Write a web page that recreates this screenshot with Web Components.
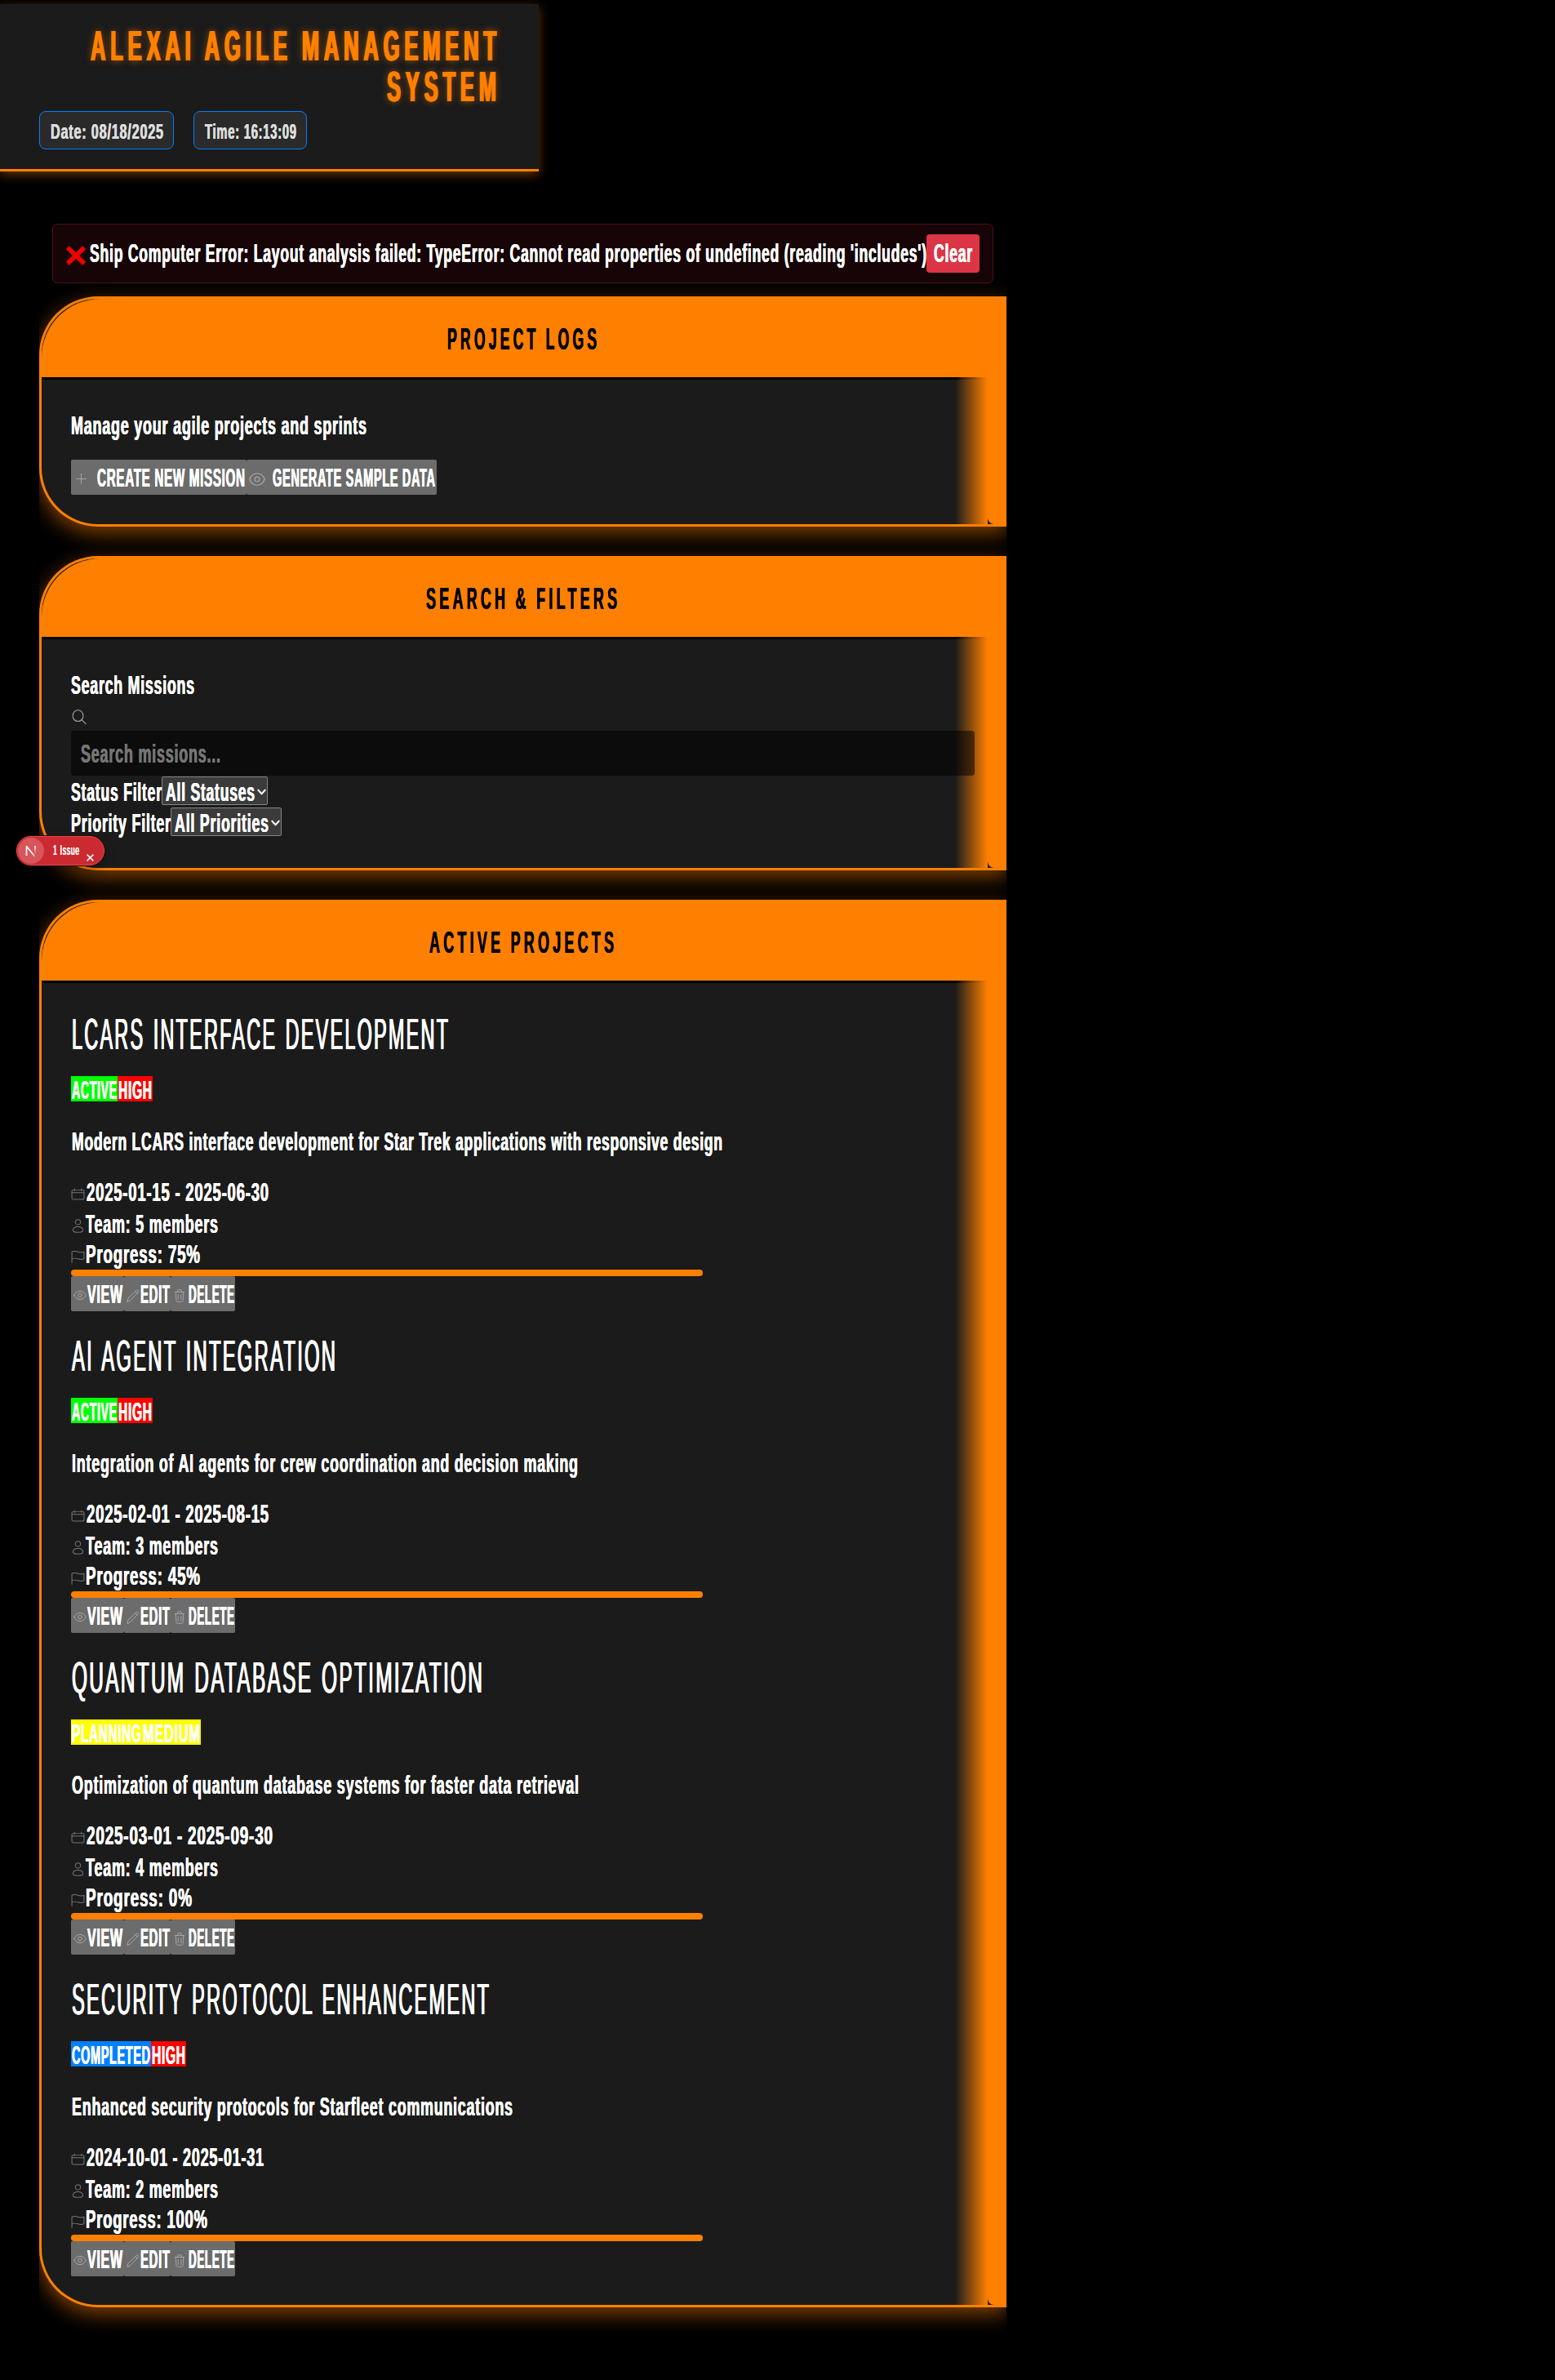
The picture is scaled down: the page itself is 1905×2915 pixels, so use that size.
<!DOCTYPE html>
<html lang="en">
<head>
<meta charset="utf-8">
<title>AlexAI Agile Management System</title>
<style>
html,body{margin:0;background:#000}
body{min-height:2915px;width:1905px;position:relative;padding-top:5px;box-sizing:border-box;color:#fff;
font-family:"Liberation Sans",Arial,sans-serif;font-weight:700;font-size:30.5px;letter-spacing:1.3px;word-spacing:0px;overflow-x:hidden}
.panels{margin:16px 0 0 48px;width:1185px;overflow-x:clip;overflow-y:visible;display:flex;flex-direction:column;gap:36px}
issue-badge{position:absolute;left:20px;top:1024px}
</style>
</head>
<body>
<app-header></app-header>
<ship-error></ship-error>
<div class="panels">
<lcars-panel title-text="PROJECT LOGS" title-width="183"><project-logs></project-logs></lcars-panel>
<lcars-panel title-text="SEARCH &amp; FILTERS" title-width="234"><search-filters></search-filters></lcars-panel>
<lcars-panel title-text="ACTIVE PROJECTS" title-width="226"><project-list></project-list></lcars-panel>
</div>
<issue-badge></issue-badge>
<script>
const define = (name, render, after) => customElements.define(name, class extends HTMLElement {
  connectedCallback() {
    if (this.shadowRoot) return;
    this.attachShadow({mode: 'open'}).innerHTML = render(this);
    if (after) after(this);
  }
});
const attr = (e, n, d = '') => e.getAttribute(n) ?? d;

/* One line of condensed type, set to the width given in w. */
define('fit-text', e => `<style>
:host{display:block;flex:none;text-align:left;width:${attr(e,'w')}px;height:${attr(e,'h',42)}px;line-height:${attr(e,'h',42)}px;white-space:nowrap;
text-shadow:var(--bolden,.5px 0 0 currentColor,-.3px 0 0 currentColor)}
span{display:inline-block;transform-origin:0 50%;margin-right:-1000px}
</style><span><slot></slot></span>`, e => {
  const s = e.shadowRoot.querySelector('span');
  const ls = parseFloat(getComputedStyle(e).letterSpacing) || 0;
  const n = s.getBoundingClientRect().width - ls;
  s.style.transform = `translateY(-1px) scaleX(${attr(e,'w') / n})`;
});

const ICONS = {
  plus: '<path d="M8 1.5v13M1.5 8h13"/>',
  eye: '<path d="M.8 8C2.5 4.5 5 2.5 8 2.5s5.500 2 7.200 5.500c-1.700 3.500-4.200 5.500-7.200 5.500S2.500 11.500.8 8z"/><circle cx="8" cy="8" r="2.400"/>',
  roundeye: '<path d="M.6 8C2 3.300 4.500.8 8 .8S14 3.300 15.400 8C14 12.700 11.500 15.200 8 15.200S2 12.700.6 8z"/><ellipse cx="8" cy="8" rx="2.200" ry="3"/>',
  search: '<ellipse cx="6.700" cy="6.800" rx="5.700" ry="6.100"/><path d="M10.700 11.200l4.700 4.700"/>',
  calendar: '<rect x="1" y="2.500" width="14" height="12.500" rx="2"/><path d="M1 6.200h14M4 1v2.800M12 1v2.800"/>',
  user: '<circle cx="8" cy="3.700" r="3"/><path d="M2.300 13.200c0-2.700 2.500-4.300 5.700-4.300s5.700 1.600 5.700 4.300c0 1.600-2.700 2.200-5.700 2.200s-5.700-.6-5.700-2.200z"/>',
  flag: '<path d="M1 15.500V2.200c2.800-1.200 4.700-.7 7 .1s4.500.9 7 0v8.500c-2.500.9-4.700.8-7 0s-4.200-1.200-7 0"/>',
  pencil: '<path d="M1 15l1-4L12.300 1.400c.7-.6 1.500-.5 2.100.1s.6 1.500 0 2.100L4.500 13.800zM11 2.700l2.300 2.300"/>',
  trash: '<path d="M1.500 3.500h13M5 3.500l.7-2.700h4.600l.7 2.700M2.600 3.700l.7 10c.1 1 .7 1.600 1.700 1.600h6c1 0 1.600-.6 1.700-1.600l.7-10M6 6.700v5.800M10 6.700v5.800"/>',
  chevron: '<path d="M2 5l6 6 6-6"/>'
};
define('ui-icon', e => `<style>
:host{display:block;flex:none;width:${attr(e,'w',16)}px;height:${attr(e,'h',16)}px}
svg{display:block;width:100%;height:100%;fill:none;stroke:currentColor;stroke-width:${attr(e,'stroke',1)};stroke-linecap:round;stroke-linejoin:round}
</style><svg viewBox="0 0 16 16" preserveAspectRatio="none">${ICONS[attr(e,'name')]}</svg>`);

define('status-pill', e => `<style>
:host{display:flex;box-sizing:border-box;width:${attr(e,'w')}px;height:47px;padding:4px 0 0 13px;border:1px solid #0080ff;border-radius:8px;background:#2a2a2a;color:#ddd;font-size:26.200px}
</style><fit-text w="${attr(e,'tw')}" h="43">${attr(e,'label')}</fit-text>`);

define('app-header', () => `<style>
:host{display:flex;flex-direction:column;box-sizing:border-box;width:660px;height:205px;padding:27px 0 0 48px;background:#1b1b1b;border-bottom:3px solid #ff8000;box-shadow:0 4px 12px rgba(255,128,0,.4)}
h1{margin:0;display:flex;flex-direction:column;align-items:flex-end;padding-right:52px;color:#ff8000;font-size:52.500px;letter-spacing:12px;word-spacing:-2px;
--bolden:1.700px 0 0 #ff8000,-1.700px 0 0 #ff8000,0 0 12px rgba(255,128,0,.6)}
.row{display:flex;gap:24px;margin-top:4px}
</style><h1><fit-text w="497" h="50">ALEXAI AGILE MANAGEMENT</fit-text><fit-text w="134" h="50">SYSTEM</fit-text></h1>
<div class="row"><status-pill w="165" tw="138" label="Date: 08/18/2025"></status-pill><status-pill w="139" tw="112" label="Time: 16:13:09"></status-pill></div>`);

define('ship-error', () => `<style>
:host{display:flex;align-items:center;box-sizing:border-box;width:1153px;height:73px;margin:64px 0 0 64px;padding-left:16px;border:1px solid #45121a;border-radius:6px;background:#160407}
svg{width:24px;height:24px;margin:5px 5px 0 0;display:block}
button{display:flex;align-items:center;width:65px;height:47px;margin:0;padding:0 0 0 9px;border:0;border-radius:4px;background:#dc3545;color:#fff;font:inherit;letter-spacing:inherit}
fit-text{margin-top:1px}
</style><svg viewBox="0 0 24 24"><path d="M3.600 0L12 8.200 20.400 0 24 4.200 16.200 12 24 19.800 20.400 24 12 15.800 3.600 24 0 19.800 7.800 12 0 4.200z" fill="#f00000"/></svg>
<fit-text w="1025">Ship Computer Error: Layout analysis failed: TypeError: Cannot read properties of undefined (reading 'includes')</fit-text>
<button><fit-text w="47">Clear</fit-text></button>`);

define('lcars-panel', e => `<style>
:host{display:block;box-sizing:border-box;position:relative;border:3px solid #ff8000;border-right:0;border-radius:72px 0 0 72px;background:#1b1b1b;box-shadow:0 8px 24px rgba(255,128,0,.5)}
h2{display:flex;justify-content:center;box-sizing:border-box;height:99px;margin:0;padding:4px 6px 0 0;border-bottom:3px solid #000;border-radius:72px 0 0 0;background:#ff8000;color:#000;font-size:37.700px;letter-spacing:9px;word-spacing:-2px;--bolden:.4px 0 0 #000,-.4px 0 0 #000}
.body{position:relative;padding:35px 39px 36px 36px}
.fade{position:absolute;right:23px;top:96px;bottom:0;width:40px;background:linear-gradient(90deg,transparent,#ff8000)}
.strip{position:absolute;right:0;top:96px;bottom:0;width:23px;background:#ff8000;border-bottom-left-radius:8px}
</style><h2><fit-text w="${attr(e,'title-width')}" h="93">${attr(e,'title-text').replace('&','&amp;')}</fit-text></h2>
<div class="fade"></div><div class="strip"></div><div class="body"><slot></slot></div>`);

define('action-button', e => `<style>
:host{display:block}
button{display:flex;align-items:center;box-sizing:border-box;width:${attr(e,'w')}px;height:43px;margin:0;border:0;border-radius:2px;padding:2px 0 0 ${attr(e,'pad',3)}px;gap:${attr(e,'gap',3)}px;background:#6c6c6c;color:#fff;font:inherit;letter-spacing:inherit;word-spacing:inherit}
ui-icon{color:#a8a8a8;position:relative;top:1px}
</style><button><ui-icon name="${attr(e,'icon')}" w="${attr(e,'iw',16)}" h="${attr(e,'ih',16)}"></ui-icon><fit-text w="${attr(e,'tw')}" h="40">${attr(e,'label')}</fit-text></button>`);

define('project-logs', () => `<style>
:host{display:block}.row{display:flex;margin-top:18px}
</style><fit-text w="362" h="45">Manage your agile projects and sprints</fit-text>
<div class="row"><action-button w="215" pad="5" gap="12" iw="15" ih="15" tw="181" icon="plus" label="CREATE NEW MISSION"></action-button>
<action-button w="233" pad="3" gap="9" iw="20" ih="16" tw="199" icon="roundeye" label="GENERATE SAMPLE DATA"></action-button></div>`);

define('filter-row', e => `<style>
:host{display:flex;height:38px}
.label{padding-top:1px}
.select{display:flex;box-sizing:border-box;width:${attr(e,'sw')}px;height:35px;margin-top:1px;border:1px solid #858585;border-radius:2px;background:#3b3b3b;padding-left:4px;gap:3px}
ui-icon{margin-top:12px}
</style><fit-text class="label" h="40" w="${attr(e,'lw')}">${attr(e,'label')}</fit-text>
<div class="select"><fit-text h="38" w="${attr(e,'tw')}">${attr(e,'value')}</fit-text><ui-icon name="chevron" w="11" h="12" stroke="3"></ui-icon></div>`);

define('search-filters', () => `<style>
:host{display:block;padding:1px 0}
ui-icon{margin:7px 0 8px 1px;color:#a0a0a0}
.input{display:flex;box-sizing:border-box;height:55px;width:1107px;border-radius:4px;background:rgba(0,0,0,.52);padding:3px 0 0 12px;color:#757575}
</style><fit-text w="151" h="43">Search Missions</fit-text><ui-icon name="search" w="18" h="18"></ui-icon>
<div class="input"><fit-text w="171" h="52">Search missions...</fit-text></div>
<filter-row label="Status Filter" lw="111" value="All Statuses" tw="109" sw="130"></filter-row>
<filter-row label="Priority Filter" lw="122" value="All Priorities" tw="115" sw="136"></filter-row>`);

define('meta-row', e => `<style>
:host{display:flex;align-items:center;height:${attr(e,'h',39)}px}
ui-icon{color:#777;position:relative;top:2px;margin-right:${attr(e,'gap',1)}px}
</style><ui-icon name="${attr(e,'icon')}" stroke=".95" w="17" h="${attr(e,'ih',16)}"></ui-icon><fit-text w="${attr(e,'w')}" h="38">${attr(e,'label')}</fit-text>`);

define('project-card', e => {
  const p = PROJECTS[attr(e,'index')];
  return `<style>
:host{display:block}
h3{margin:0;padding-left:1px;font-size:54.300px;font-weight:400;letter-spacing:5px;word-spacing:4px;--bolden:1.100px 0 0 #fff,-1px 0 0 #fff}
.badges{display:flex;margin-top:22px}
.badges div{box-sizing:border-box;height:31px;padding-left:1px}
.desc{margin:29px 0 21px;padding-left:1px}
.bar{width:774px;height:8px;border-radius:4px;background:#ff8000}
.row{display:flex}
</style><h3><fit-text w="${p.hw}" h="56">${p.title}</fit-text></h3>
<div class="badges">${p.badges.map(b => `<div style="width:${b[1]}px;background:${b[2]}"><fit-text w="${b[1]-2}" h="36">${b[0]}</fit-text></div>`).join('')}</div>
<div class="desc"><fit-text w="${p.dw}">${p.desc}</fit-text></div>
<meta-row icon="calendar" ih="15" gap="2" w="${p.tw}" label="${p.date}"></meta-row>
<meta-row icon="user" ih="17" gap="1" w="162" label="Team: ${p.team} members"></meta-row>
<meta-row icon="flag" h="36" gap="1" w="${p.pw}" label="Progress: ${p.progress}%"></meta-row>
<div class="bar"></div>
<div class="row"><action-button w="65" iw="16" ih="15" gap="1" tw="43" icon="eye" label="VIEW"></action-button>
<action-button w="57" iw="16" ih="16" gap="1" tw="36" icon="pencil" label="EDIT"></action-button>
<action-button w="79" iw="14" ih="16" pad="4" gap="4" tw="56" icon="trash" label="DELETE"></action-button></div>`;
});

const GREEN = '#00ff00', RED = '#ff0000', YELLOW = '#ffff00', BLUE = '#0080ff';
const PROJECTS = [
  {title:'LCARS INTERFACE DEVELOPMENT', hw:461, badges:[['ACTIVE',57,GREEN],['HIGH',43,RED]], desc:'Modern LCARS interface development for Star Trek applications with responsive design', dw:797, date:'2025-01-15 - 2025-06-30', tw:223, team:5, progress:75, pw:140},
  {title:'AI AGENT INTEGRATION', hw:323, badges:[['ACTIVE',57,GREEN],['HIGH',43,RED]], desc:'Integration of AI agents for crew coordination and decision making', dw:620, date:'2025-02-01 - 2025-08-15', tw:223, team:3, progress:45, pw:140},
  {title:'QUANTUM DATABASE OPTIMIZATION', hw:503, badges:[['PLANNING',87,YELLOW],['MEDIUM',72,YELLOW]], desc:'Optimization of quantum database systems for faster data retrieval', dw:621, date:'2025-03-01 - 2025-09-30', tw:228, team:4, progress:0, pw:130},
  {title:'SECURITY PROTOCOL ENHANCEMENT', hw:511, badges:[['COMPLETED',98,BLUE],['HIGH',43,RED]], desc:'Enhanced security protocols for Starfleet communications', dw:540, date:'2024-10-01 - 2025-01-31', tw:217, team:2, progress:100, pw:149}
];
define('project-list', () => `<style>
:host{display:flex;flex-direction:column;gap:28px;padding-top:1px;margin-bottom:-1px}
</style>${PROJECTS.map((_, i) => `<project-card index="${i}"></project-card>`).join('')}`);

define('issue-badge', () => `<style>
:host{display:flex;align-items:center;box-sizing:border-box;width:108px;height:36px;border:1px solid #e5484d;border-radius:18px;background:#ca2a30;box-shadow:0 0 0 1px #2a0a0c,0 8px 16px rgba(0,0,0,.25);padding-left:1px;font-size:16.500px;font-weight:400}
.logo{width:32px;height:32px;border-radius:50%;background:#d6565b}
svg{display:block}
fit-text{margin-left:11px}
.x{margin:17px 0 0 9px;width:9px;height:9px}
</style><svg class="logo" viewBox="0 0 32 32" fill="none" stroke="#fff" stroke-width="1.700"><defs><linearGradient id="g" x1="0" y1="10" x2="0" y2="20" gradientUnits="userSpaceOnUse"><stop stop-color="#fff"/><stop offset="1" stop-color="#fff" stop-opacity="0"/></linearGradient><linearGradient id="d" x1="10" y1="10" x2="22" y2="23" gradientUnits="userSpaceOnUse"><stop offset=".7" stop-color="#fff"/><stop offset="1" stop-color="#fff" stop-opacity=".1"/></linearGradient></defs><path d="M10.500 22V10.500" /><path d="M10.300 10.200L21 23.500" stroke="url(#d)"/><path d="M21 10v9" stroke="url(#g)"/></svg>
<fit-text w="32" h="34">1 Issue</fit-text><svg class="x" viewBox="0 0 9 9" stroke="#fff" stroke-width="1.500"><path d="M.6.6l7.800 7.800M8.400.6L.6 8.400"/></svg>`);
</script>
</body>
</html>
